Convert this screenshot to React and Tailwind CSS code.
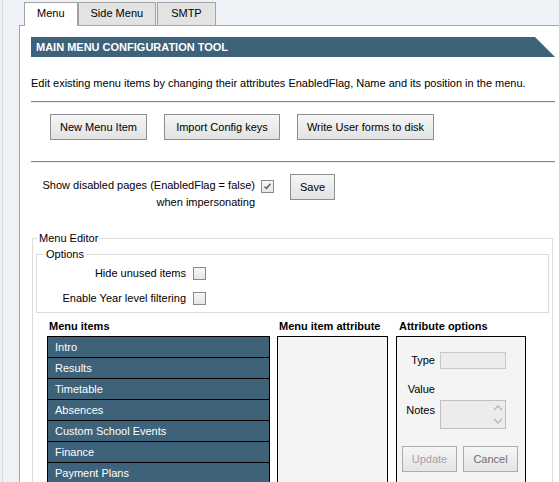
import React from 'react';

const Check = ({ checked }) => (
  <div className="w-[13px] h-[13px] border border-[#8a8a8a] bg-gradient-to-b from-[#f7f7f7] to-[#e6e6e6] flex items-center justify-center shrink-0">
    {checked && (
      <svg width="9" height="9" viewBox="0 0 9 9">
        <path d="M1.5 4.5 L3.5 6.5 L7.5 1.8" fill="none" stroke="#5a5a5a" strokeWidth="1.4" />
      </svg>
    )}
  </div>
);

const Btn = ({ children, className = '' }) => (
  <button className={`h-[26px] border border-[#8e8e8e] bg-gradient-to-b from-[#f6f6f6] to-[#e2e2e2] text-black text-[11px] ${className}`}>
    {children}
  </button>
);

const menuItems = ['Intro', 'Results', 'Timetable', 'Absences', 'Custom School Events', 'Finance', 'Payment Plans'];

export default function App() {
  return (
    <div className="h-[482px] w-[559px] overflow-hidden bg-[#eef2f6] font-['Liberation_Sans',Arial,sans-serif] text-[11px] text-black">
      <div className="ml-[2px] h-full border-l border-[#d4d9de] pl-[16px]">
        {/* tabs */}
        <div className="flex h-[25px] items-end pl-[5px]">
          <div className="relative z-10 -mb-px h-[24px] border border-b-0 border-[#a3a3a3] bg-white px-[12px] pt-[4px] leading-[13px]">Menu</div>
          <div className="h-[23px] border border-b-0 border-[#a3a3a3] bg-[#e3e3e3] px-[12px] pt-[4px] leading-[13px]">Side Menu</div>
          <div className="ml-px h-[23px] border border-b-0 border-[#a3a3a3] bg-[#e3e3e3] px-[13px] pt-[4px] leading-[13px]">SMTP</div>
        </div>

        {/* panel */}
        <div className="h-full border-l border-t border-[#a6a6a6] bg-white pl-[11px] pr-[4px] pt-[11px]">
          <div className="h-[20px] bg-[#3d6279] pl-[5px] font-bold leading-[20px] text-white [clip-path:polygon(0_0,calc(100%-20px)_0,100%_100%,0_100%)]">
            MAIN MENU CONFIGURATION TOOL
          </div>

          <p className="mt-[20px] leading-[13px]">
            Edit existing menu items by changing their attributes EnabledFlag, Name and its position in the menu.
          </p>

          <div className="mt-[11px] border-b border-t border-b-[#ececec] border-t-[#8a8a8a]" />

          <div className="mt-[11px] ml-[19px] flex gap-[17px]">
            <Btn className="w-[97px]">New Menu Item</Btn>
            <Btn className="w-[116px]">Import Config keys</Btn>
            <Btn className="w-[137px]">Write User forms to disk</Btn>
          </div>

          <div className="mt-[21px] border-b border-t border-b-[#ececec] border-t-[#8a8a8a]" />

          <div className="mt-[11px] flex items-start">
            <div className="w-[224px] pt-[3px] text-right leading-[17px]">
              Show disabled pages (EnabledFlag = false)
              <br />
              when impersonating
            </div>
            <div className="ml-[6px] mt-[6px]">
              <Check checked />
            </div>
            <Btn className="ml-[16px] h-[25px] w-[45px]">Save</Btn>
          </div>

          {/* menu editor */}
          <fieldset className="mt-[21px] ml-px mr-[2px] min-w-0 border border-[#dcdcdc] px-[3px]">
            <legend className="ml-px px-[2px] leading-[13px]">Menu Editor</legend>

            <fieldset className="mt-[3px] min-w-0 border border-[#dcdcdc] px-[3px] pb-px">
              <legend className="ml-[4px] px-[2px] leading-[13px]">Options</legend>
              <div className="flex h-[25px] items-center">
                <span className="w-[146px] text-right">Hide unused items</span>
                <div className="ml-[7px]"><Check /></div>
              </div>
              <div className="flex h-[25px] items-center">
                <span className="w-[146px] text-right">Enable Year level filtering</span>
                <div className="ml-[7px]"><Check /></div>
              </div>
            </fieldset>

            <div className="ml-[11px] mt-[7px] flex gap-[7px]">
              {/* menu items */}
              <div className="w-[223px]">
                <div className="h-[16px] pl-[2px] font-bold leading-[13px]">Menu items</div>
                <div className="border border-black">
                  {menuItems.map((m) => (
                    <div key={m} className="h-[21px] border-b border-black bg-[#3d6279] pl-[7px] leading-[20px] text-white">
                      {m}
                    </div>
                  ))}
                </div>
              </div>

              {/* attribute */}
              <div className="w-[111px]">
                <div className="h-[16px] pl-[2px] font-bold leading-[13px]">Menu item attribute</div>
                <div className="h-[200px] border border-black bg-[#f4f4f4]" />
              </div>

              {/* attribute options */}
              <div className="ml-px w-[130px]">
                <div className="h-[16px] pl-[3px] font-bold leading-[13px]">Attribute options</div>
                <div className="h-[200px] border border-black bg-[#f4f4f4] pt-[15px]">
                  <div className="flex h-[17px] items-center">
                    <span className="w-[38px] text-right">Type</span>
                    <div className="ml-[5px] h-[17px] w-[66px] border border-[#c8c8c8] bg-[#ececec]" />
                  </div>
                  <div className="mt-[14px] w-[38px] text-right leading-[13px]">Value</div>
                  <div className="mt-[4px] flex items-start">
                    <span className="w-[38px] pt-[4px] text-right leading-[13px]">Notes</span>
                    <div className="ml-[5px] flex h-[29px] w-[66px] justify-end border border-[#c0c0c0] bg-[#ececec]">
                      <div className="flex w-[15px] flex-col items-center justify-between py-[3px]">
                        <svg width="10" height="7" viewBox="0 0 10 7">
                          <path d="M1 6 L5 2 L9 6" fill="none" stroke="#b8b8b8" strokeWidth="1.3" />
                        </svg>
                        <svg width="10" height="7" viewBox="0 0 10 7">
                          <path d="M1 1 L5 5 L9 1" fill="none" stroke="#b8b8b8" strokeWidth="1.3" />
                        </svg>
                      </div>
                    </div>
                  </div>
                  <div className="ml-[5px] mt-[17px] flex gap-[6px]">
                    <button className="h-[26px] w-[55px] border border-[#adadad] bg-gradient-to-b from-[#f6f6f6] to-[#e4e4e4] text-[11px] text-[#a3a3a3]">Update</button>
                    <button className="h-[26px] w-[55px] border border-[#adadad] bg-gradient-to-b from-[#f6f6f6] to-[#e4e4e4] text-[11px] text-[#6e6e6e]">Cancel</button>
                  </div>
                </div>
              </div>
            </div>
          </fieldset>
        </div>
      </div>
    </div>
  );
}
